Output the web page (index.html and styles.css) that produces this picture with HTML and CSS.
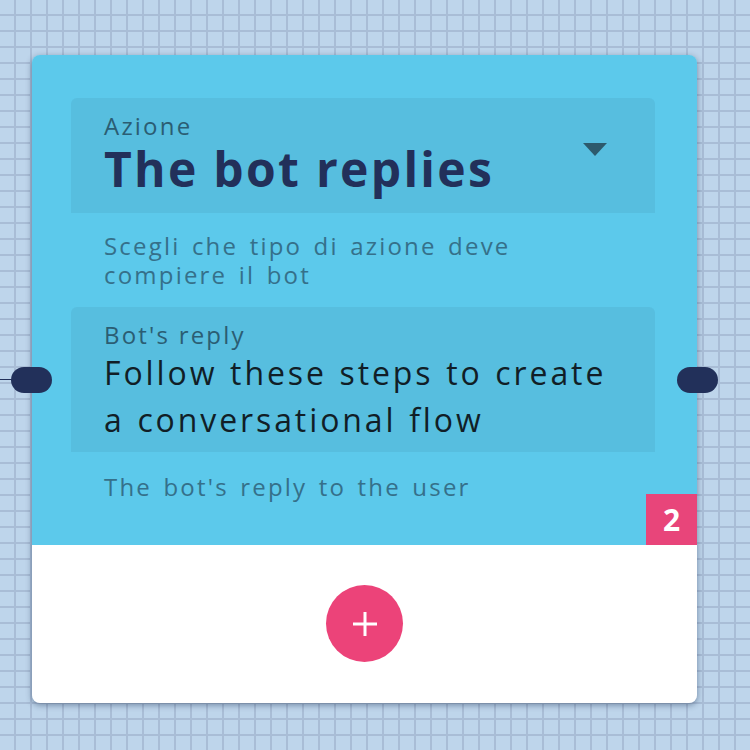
FILE: index.html
```html
<!DOCTYPE html>
<html lang="it">
<head>
    <meta charset="UTF-8">
    <meta name="viewport" content="width=device-width, initial-scale=1.0">
    <title>Flow editor</title>
    <link rel="stylesheet" href="styles.css">
</head>
<body>
    <div class="canvas">
        <div class="node">
            <span class="port port-in"></span>
            <span class="port port-out"></span>
            <div class="node-body">
                <div class="field">
                    <div class="field-label">Azione</div>
                    <div class="field-select">The bot replies</div>
                    <span class="caret"></span>
                </div>
                <p class="hint">Scegli che tipo di azione deve compiere il bot</p>
                <div class="field field-reply">
                    <div class="field-label">Bot's reply</div>
                    <div class="field-text">Follow these steps to create a conversational flow</div>
                </div>
                <p class="hint hint-last">The bot's reply to the user</p>
                <span class="badge">2</span>
            </div>
            <div class="node-footer">
                <button class="add-button" aria-label="Aggiungi">
                    <svg width="26" height="26" viewBox="0 0 26 26">
                        <path d="M13 1v24M1 13h24" stroke="#fff" stroke-width="3"/>
                    </svg>
                </button>
            </div>
        </div>
    </div>
</body>
</html>
```

FILE: styles.css
```css
body {
    margin: 0;
    font-family: "Open Sans", "DejaVu Sans", sans-serif;
    background-color: #bed5eb;
    background-image:
        linear-gradient(to right, #a9bdd6 2px, transparent 2px),
        linear-gradient(to bottom, #a9bdd6 2px, transparent 2px);
    background-size: 16px 16px;
    background-position: -2px -2px;
}
.canvas {
    width: 750px;
    height: 750px;
    padding: 55px 0 0 32px;
    box-sizing: border-box;
}
.node {
    position: relative;
    width: 665px;
    border-radius: 8px;
    box-shadow: 0 2px 6px rgba(20, 40, 70, 0.45);
}

/* connettori a sinistra e a destra */
.port {
    position: absolute;
    z-index: 2;
    top: 312px;
    width: 41px;
    height: 26px;
    border-radius: 13px;
    background-color: #22305a;
}
.port-in {
    left: -21px;
}
.port-in::before {
    content: "";
    position: absolute;
    right: 40px;
    top: 12px;
    width: 12px;
    height: 1px;
    background-color: #22305a;
}
.port-out {
    right: -21px;
}

.node-body {
    position: relative;
    background-color: #5cc9eb;
    border-radius: 8px 8px 0 0;
    padding: 43px 42px 44px 39px;
}
.field {
    position: relative;
    background-color: #57bedf;
    border-radius: 6px 6px 0 0;
    padding: 14px 33px 15px;
}
.field-label {
    font-size: 24px;
    line-height: 28px;
    color: #2b5d73;
    letter-spacing: 2.2px;
}
.field-select {
    font-size: 48px;
    line-height: 58px;
    font-weight: 700;
    color: #22305a;
    letter-spacing: 2.3px;
}
.caret {
    position: absolute;
    right: 48px;
    top: 45px;
    width: 0;
    height: 0;
    border-left: 12.5px solid transparent;
    border-right: 12.5px solid transparent;
    border-top: 13px solid #2d5a6c;
}
.field-reply {
    padding-bottom: 9px;
}
.field-text {
    font-size: 32px;
    line-height: 47px;
    color: #111e27;
    letter-spacing: 2.9px;
    word-spacing: 1.5px;
}
.hint {
    margin: 18px 0;
    padding: 0 33px;
    font-size: 24px;
    line-height: 29px;
    color: #35708a;
    letter-spacing: 2.2px;
    word-spacing: 3px;
}
.hint-last {
    margin: 20px 0 0;
}
.badge {
    position: absolute;
    right: 0;
    bottom: 0;
    width: 51px;
    height: 51px;
    background-color: #e8457a;
    color: white;
    font-size: 30px;
    font-weight: 700;
    line-height: 51px;
    text-align: center;
}
.node-footer {
    background-color: white;
    border-radius: 0 0 8px 8px;
    padding: 40px 0 41px;
    display: flex;
    justify-content: center;
}
.add-button {
    width: 77px;
    height: 77px;
    border: none;
    border-radius: 50%;
    background-color: #ec4379;
    padding: 0;
    display: flex;
    align-items: center;
    justify-content: center;
    cursor: pointer;
}
```
